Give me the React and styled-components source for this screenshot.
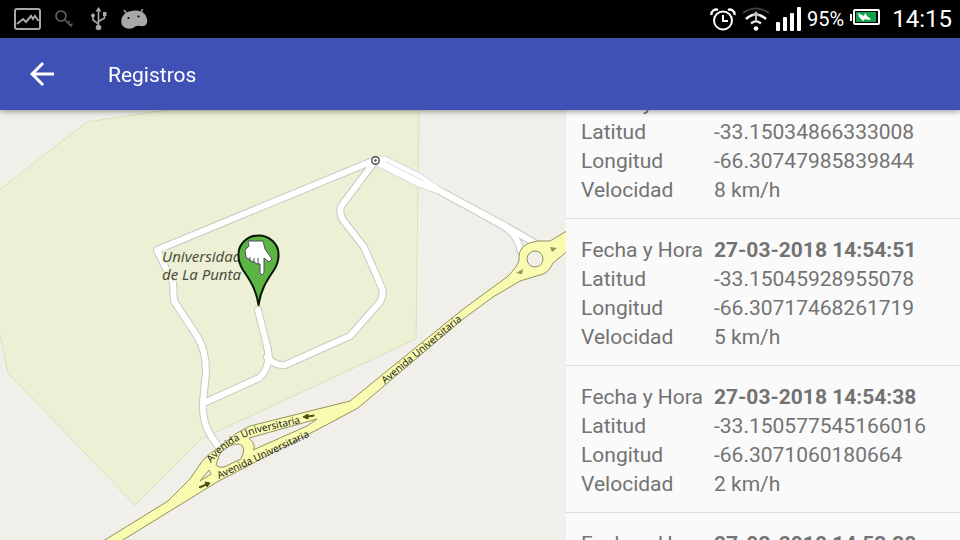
import React, { useLayoutEffect, useRef } from "react";
import styled, { createGlobalStyle } from "styled-components";

const GlobalStyle = createGlobalStyle`
  * { box-sizing: border-box; }
  body { margin: 0; background: #000; font-family: Roboto, "Noto Sans", sans-serif; }
`;

const Screen = styled.div`
  display: flex;
  flex-direction: column;
  height: 100vh;
  overflow: hidden;
`;

const StatusBar = styled.div`
  display: flex;
  justify-content: space-between;
  align-items: center;
  height: 38px;
  padding: 0 8px 0 14px;
  background: #000;
  color: #fff;
`;

const StatusGroup = styled.div`
  display: flex;
  align-items: center;
  gap: ${(p) => p.$gap};
`;

const Battery = styled.span`
  font-size: 20px;
  line-height: 36px;
`;

const Clock = styled.time`
  margin-left: 6px;
  font-size: 24px;
  line-height: 36px;
`;

const Toolbar = styled.header`
  position: relative;
  z-index: 1;
  display: flex;
  align-items: center;
  gap: 48px;
  height: 72px;
  padding: 0 24px;
  background: #3f51b5;
  color: #fff;
  box-shadow: 0 1px 6px rgba(0, 0, 0, 0.45);
`;

const BackButton = styled.button`
  display: flex;
  padding: 0;
  border: 0;
  background: none;
  color: inherit;
`;

const Title = styled.h1`
  margin: 0;
  padding-top: 2px;
  font-size: 21px;
  font-weight: 400;
  line-height: 32px;
`;

const Content = styled.main`
  display: grid;
  grid-template-columns: 283fr 197fr;
  flex: 1;
  min-height: 0;
`;

const MapPane = styled.section`
  min-width: 0;
  overflow: hidden;
  background: #f0efe9;
`;

const MapDrawing = styled.svg`
  display: block;
  width: 100%;
  height: 100%;
`;

const RecordList = styled.ul`
  margin: 0;
  padding: 0;
  min-width: 0;
  overflow-y: auto;
  scrollbar-width: none;
  list-style: none;
  background: #fafafa;
`;

const RecordItem = styled.li`
  padding: 17px 15px 13px;
  border-bottom: 1px solid #dcdcdc;
`;

const Fields = styled.dl`
  display: grid;
  grid-template-columns: 133px 1fr;
  margin: 0;
  color: #737373;
  font-size: 21px;
  line-height: 29px;
  white-space: nowrap;
`;

const Label = styled.dt``;

const Value = styled.dd`
  margin: 0;
  font-weight: ${(p) => (p.$strong ? 700 : 400)};
`;

const records = [
  { date: "27-03-2018 14:55:01", lat: "-33.15034866333008", lon: "-66.30747985839844", speed: "8 km/h" },
  { date: "27-03-2018 14:54:51", lat: "-33.15045928955078", lon: "-66.30717468261719", speed: "5 km/h" },
  { date: "27-03-2018 14:54:38", lat: "-33.150577545166016", lon: "-66.3071060180664", speed: "2 km/h" },
  { date: "27-03-2018 14:53:38", lat: "-33.15057754516602", lon: "-66.3071060180664", speed: "0 km/h" },
];

const INITIAL_SCROLL = 38;

function PictureIcon() {
  return (
    <svg width="27" height="22" viewBox="0 0 27 22" fill="none" stroke="#a8a8a8" strokeWidth="2">
      <rect x="1" y="1" width="25" height="20" rx="2" />
      <path d="M3 16L9 11L12 14L17 8L19 11L21 8L24.500 13" strokeWidth="2" />
    </svg>
  );
}

function KeyIcon() {
  return (
    <svg width="22" height="18" viewBox="0 0 22 18" fill="none" stroke="#5e5e5e" strokeWidth="1.7">
      <circle cx="6" cy="6" r="5" />
      <path d="M9.500 9.500l7 7M13 13l2-2M15.500 15.500l2-2" />
    </svg>
  );
}

function UsbIcon() {
  return (
    <svg width="16" height="24" viewBox="0 0 16 24" fill="none" stroke="#a8a8a8" strokeWidth="1.6">
      <path d="M7.500 4v16M7.500 17L2 13V9M7.500 14.500L13.500 11V8" />
      <path d="M7.500 0l3 4.500h-6zM12 5h3.500v4H12z" fill="#a8a8a8" stroke="none" />
      <circle cx="2" cy="8.500" r="2" fill="#a8a8a8" stroke="none" />
      <circle cx="7.500" cy="20.500" r="2.800" fill="#a8a8a8" stroke="none" />
    </svg>
  );
}

function DroidIcon() {
  return (
    <svg width="27" height="20" viewBox="0 0 27 20">
      <path d="M3 1l3 4M21.500 0l-2 4.500" stroke="#a8a8a8" strokeWidth="1.500" />
      <path d="M5 4C9 1 17 0.500 21 3c4 2 6 7 5 11-1 3-4 3.500-7 3-3-0.500-4 0-7 2-4 1.500-9 0.500-11-3C-1 12 1 6 5 4z" fill="#a8a8a8" />
      <circle cx="7.500" cy="9" r="1.100" fill="#000" />
      <circle cx="17.500" cy="7.500" r="1.100" fill="#000" />
    </svg>
  );
}

function AlarmIcon() {
  return (
    <svg width="26" height="23" viewBox="0 0 26 23" fill="none" stroke="#fff" strokeWidth="2">
      <circle cx="13" cy="12.500" r="9" />
      <path d="M13 7v6h5" />
      <path d="M1.500 7C1 3 5 .5 8 2M24.500 7C25 3 21 .5 18 2" strokeWidth="2.300" />
    </svg>
  );
}

function WifiIcon() {
  return (
    <svg width="28" height="24" viewBox="0 0 28 24" fill="none" strokeWidth="2.500">
      <path d="M1 6Q14-3 27 6" stroke="#3d3d3d" strokeWidth="2" />
      <path d="M4 12Q14 3 24 12" stroke="#fff" />
      <path d="M9 16.500Q14 12 19 16.500" stroke="#ddd" />
      <path d="M14 4l4 5h-3v5h-2V9h-3z" fill="#bbb" />
      <circle cx="14" cy="21.500" r="2.300" fill="#fff" />
    </svg>
  );
}

function SignalIcon() {
  return (
    <svg width="25" height="24" viewBox="0 0 25 24" fill="#fff">
      <rect x="0" y="15" width="4" height="9" rx="1" />
      <rect x="7" y="10" width="4" height="14" rx="1" />
      <rect x="14" y="6" width="4" height="18" rx="1" />
      <rect x="21" y="0" width="4" height="24" rx="1" />
    </svg>
  );
}

function BatteryIcon() {
  return (
    <svg width="30" height="20" viewBox="0 0 30 20">
      <rect x="0" y="5" width="2" height="7" fill="#fff" />
      <rect x="4" y="1" width="25" height="14" rx="1" fill="#000" stroke="#fff" strokeWidth="2" />
      <rect x="6" y="3" width="20" height="10" fill="#12a24b" />
      <path d="M8 4l6 3 1-3 3 4 3 2-2 1-4-1-2 2-4-4z" fill="#fff" />
    </svg>
  );
}

function BackIcon() {
  return (
    <svg width="36" height="36" viewBox="0 0 24 24" fill="currentColor">
      <path d="M20 11H7.830l5.590-5.590L12 4l-8 8 8 8 1.410-1.410L7.830 13H20v-2z" />
    </svg>
  );
}

const campusRoads = [
  "M258 310L267 346Q270 359 268 363",
  "M375 161L342 205Q338 211 343 220L364 247L381 286Q385 293 380 302L350 336L285 365Q275 366 267 357",
  "M267 346Q272 367 259 378L206 402",
  "M375 160L157 250L173 283L174 301L197 336Q206 350 206 372L203 402Q202 422 211 436L218 446",
  "M378 161L440 191L507 227L540 246",
  "M440 191L505 227Q518 236 521 252",
];

const slipRoad = "M378 157H385L420 174L443 190L438 193L418 186L378 166z";

function StreetMap() {
  return (
    <MapDrawing viewBox="0 110 566 430" preserveAspectRatio="xMinYMin slice" role="img" aria-label="Universidad de La Punta">
      <rect y="110" width="566" height="430" fill="#f0efe9" />
      <path d="M-2 191L87 122L180 108H419L416 339L201 439L135 505L8 373L-2 325z" fill="#eef0d6" stroke="#dcdfb6" />
      <g fill="none" strokeLinejoin="round" strokeLinecap="round">
        <g stroke="#cbc9c4" strokeWidth="8">
          {campusRoads.map((d) => <path key={d} d={d} />)}
          <path d={slipRoad} strokeWidth="2" />
        </g>
        <g stroke="#fff" strokeWidth="6">
          {campusRoads.map((d) => <path key={d} d={d} />)}
          <path d={slipRoad} fill="#fff" strokeWidth="1" />
        </g>
      </g>
      <path d="M386 162L424 181" stroke="#dedede" />
      <g fill="#f9fbb0" stroke="#92935c">
        <path d="M100 543L168 501L190 479L203 460Q210 453 218 448L237 433L250 426L350 401L462 310L485 293L507 277Q518 266 519 260Q517 244 537 241H550L570 229V249L553 263Q549 272 543 274L520 281L493 297L463 319L358 408L330 423L217 482L118 543z" />
        <path d="M253 450Q257 446 249 438L317 419L307 426L253 450z" fill="#f0efe9" />
        <path d="M217 462Q214 468 224 467L241 459Q247 446 239 444Q231 443 220 453z" fill="#f0efe9" />
        <circle cx="535" cy="259" r="8" fill="#f0efe9" />
        <path d="M200 481l9-11 2 4z" fill="#f0efe9" />
      </g>
      <path d="M550 247l7 1-5 4zM516 273l7-4-1 5z" fill="#92935c" />
      <path d="M199 487l7-3-1-2 5 1-3 4-1-2-6 3zM314 415l-6 1v-2l-5 3 5 2v-2l6-1z" fill="#4c4d10" stroke="#4c4d10" />
      <circle cx="375.500" cy="160.500" r="3.700" fill="#fff" stroke="#53535b" strokeWidth="1.500" />
      <circle cx="375.500" cy="160.500" r="1.300" fill="#53535b" />
      <defs>
        <path id="upper-lane" d="M211 463Q221 451 234 443Q249 434 266 431L304 422" />
        <path id="lower-lane" d="M219 479L266 457L315 434" />
        <path id="avenue" d="M385 384L469 314" />
      </defs>
      <g fill="#222" fontFamily="Noto Sans, sans-serif" fontSize="10">
        <text><textPath href="#upper-lane">Avenida Universitaria</textPath></text>
        <text><textPath href="#lower-lane">Avenida Universitaria</textPath></text>
        <text><textPath href="#avenue">Avenida Universitaria</textPath></text>
      </g>
      <g fill="#4c4f3f" stroke="#eef0d6" strokeWidth="3" paintOrder="stroke" fontFamily="Noto Sans, sans-serif" fontSize="15" fontStyle="italic">
        <text x="162" y="262">Universidad</text>
        <text x="162" y="280">de La Punta</text>
      </g>
      <path d="M258.500 305C256 288 249 279 243 270Q238 262 238.500 254A20 18.500 0 0 1 278.500 254Q279 262 274 270C268 279 261 288 258.500 305z" fill="#5bb443" stroke="#081705" strokeWidth="2" strokeLinejoin="round" />
      <path d="M248 241H263L265 249L272 259L269 262L264 258V273L262 275L260 273V264L257 264L254 262L251 261L246 257L245 250L249 246z" fill="#fff" stroke="#504b60" strokeWidth="1" />
      <path d="M250 257v4M254 258v5M258 258v6" stroke="#504b60" />
    </MapDrawing>
  );
}

function Record({ record }) {
  return (
    <RecordItem>
      <Fields>
        <Label>Fecha y Hora</Label>
        <Value $strong>{record.date}</Value>
        <Label>Latitud</Label>
        <Value>{record.lat}</Value>
        <Label>Longitud</Label>
        <Value>{record.lon}</Value>
        <Label>Velocidad</Label>
        <Value>{record.speed}</Value>
      </Fields>
    </RecordItem>
  );
}

export default function App() {
  const listRef = useRef(null);

  useLayoutEffect(() => {
    listRef.current.scrollTop = INITIAL_SCROLL;
  }, []);

  return (
    <>
      <GlobalStyle />
      <Screen>
        <StatusBar>
          <StatusGroup $gap="14px">
            <PictureIcon />
            <KeyIcon />
            <UsbIcon />
            <DroidIcon />
          </StatusGroup>
          <StatusGroup $gap="6px">
            <AlarmIcon />
            <WifiIcon />
            <SignalIcon />
            <Battery>95%</Battery>
            <BatteryIcon />
            <Clock>14:15</Clock>
          </StatusGroup>
        </StatusBar>
        <Toolbar>
          <BackButton aria-label="Volver">
            <BackIcon />
          </BackButton>
          <Title>Registros</Title>
        </Toolbar>
        <Content>
          <MapPane>
            <StreetMap />
          </MapPane>
          <RecordList ref={listRef}>
            {records.map((record) => (
              <Record key={record.date} record={record} />
            ))}
          </RecordList>
        </Content>
      </Screen>
    </>
  );
}
